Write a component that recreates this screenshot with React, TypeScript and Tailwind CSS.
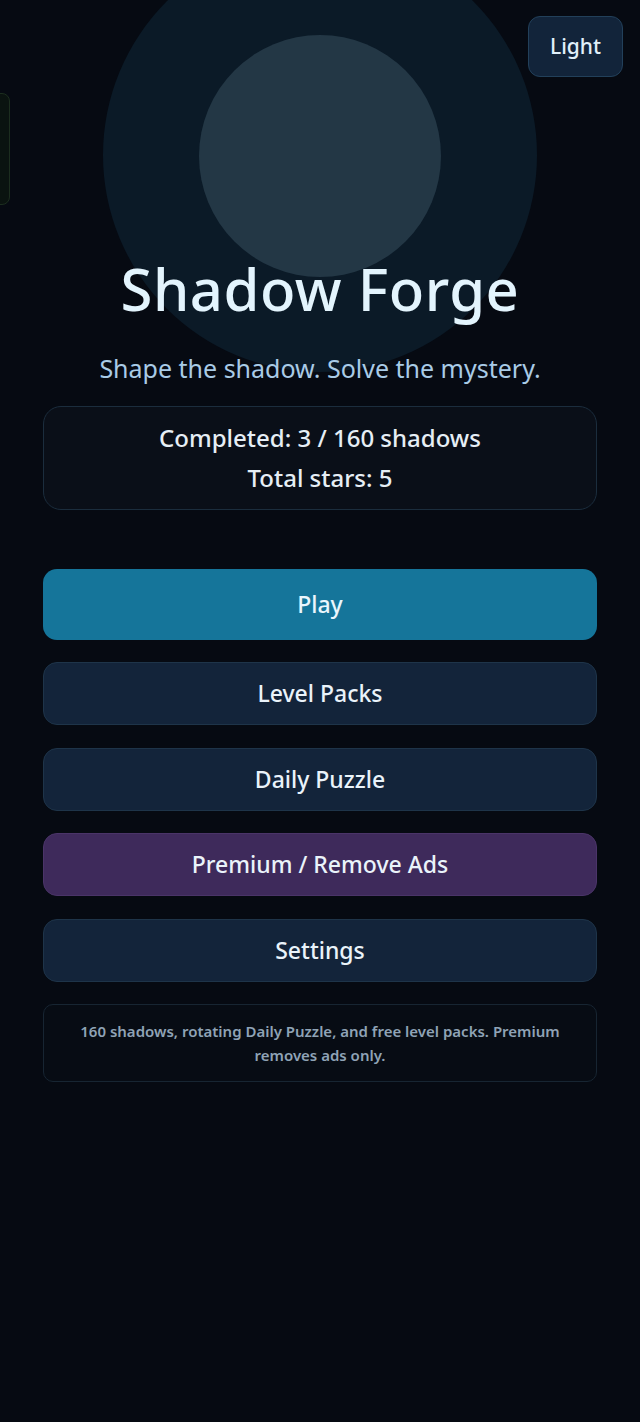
import React from 'react'

const menu = [
  { label: 'Level Packs', tone: 'bg-[#13243a] border-[#1e3449]' },
  { label: 'Daily Puzzle', tone: 'bg-[#13243a] border-[#1e3449]' },
  { label: 'Premium / Remove Ads', tone: 'bg-[#3e2a5b] border-[#4a3468]' },
  { label: 'Settings', tone: 'bg-[#13243a] border-[#1e3449]' },
]

export default function App() {
  return (
    <div
      className="relative min-h-[1422px] w-full overflow-hidden bg-[#060a12] text-[#e6f1fa]"
      style={{ fontFamily: '"Noto Sans", "Open Sans", sans-serif' }}
    >
      {/* Backdrop orbs */}
      <div className="absolute left-[103px] top-[-62px] h-[434px] w-[434px] rounded-full bg-[#0b1a27]" />
      <div className="absolute left-[199px] top-[35px] h-[242px] w-[242px] rounded-full bg-[#233745]" />

      {/* Left edge tab */}
      <div className="absolute left-[-20px] top-[93px] h-[112px] w-[30px] rounded-lg border border-[#1c2e1f] bg-[#0a1310]" />

      {/* Theme toggle */}
      <button className="absolute right-[17px] top-[16px] h-[61px] w-[95px] rounded-xl border border-[#22405a] bg-[#12243a] text-[21px] font-medium text-[#e0f0fb]">
        Light
      </button>

      <div className="relative mx-auto flex w-[554px] flex-col items-center pt-[255px]">
        <h1 className="text-[58px] font-medium leading-[68px] tracking-[0.5px] text-[#e3f4fd]">
          Shadow Forge
        </h1>
        <p className="mt-[29px] text-[25px] leading-[32px] text-[#a9cbe6]">
          Shape the shadow. Solve the mystery.
        </p>

        <div className="mt-[22px] flex h-[104px] w-full flex-col items-center justify-center rounded-[18px] border border-[#1b2d3d] bg-[#0a0f18] text-[24px] font-medium leading-[40px] text-[#e6eef5]">
          <div>Completed: 3 / 160 shadows</div>
          <div>Total stars: 5</div>
        </div>

        <button className="mt-[59px] h-[71px] w-full rounded-[14px] bg-[#15759a] text-[23px] font-medium text-[#eaf6fd]">
          Play
        </button>

        <div className="mt-[22px] flex w-full flex-col gap-[22.5px]">
          {menu.map((item) => (
            <button
              key={item.label}
              className={`h-[63px] w-full rounded-[14px] border text-[23px] font-medium text-[#eaf3fa] ${item.tone}`}
            >
              {item.label}
            </button>
          ))}
        </div>

        <div className="mt-[22px] w-full rounded-[10px] border border-[#172532] bg-[#070c14] px-[30px] py-[14px] text-center text-[15px] font-semibold leading-[24px] text-[#8fa3b6]">
          160 shadows, rotating Daily Puzzle, and free level packs. Premium removes ads only.
        </div>
      </div>
    </div>
  )
}
